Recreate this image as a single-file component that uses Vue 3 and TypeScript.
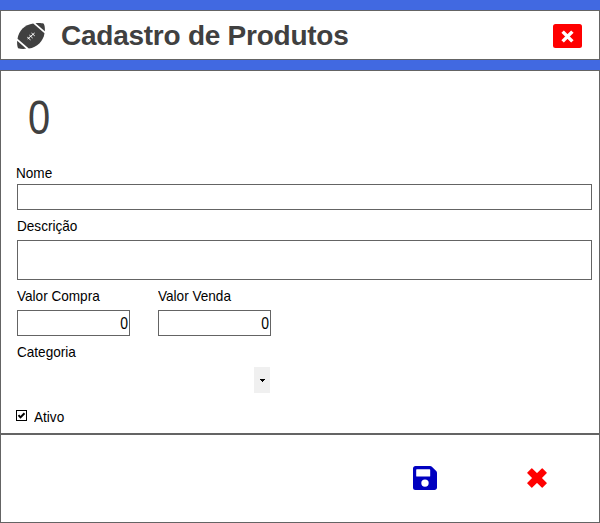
<script setup lang="ts">
import { ref } from 'vue'

const codigo = ref<number>(0)
const nome = ref<string>('')
const descricao = ref<string>('')
const valorCompra = ref<string>('0')
const valorVenda = ref<string>('0')
const ativo = ref<boolean>(true)
</script>

<template>
  <div class="window">
    <header class="titlebar">
      <svg class="ball" viewBox="0 0 28 26">
        <path d="M18.500.2C21.500-.1 24.800 0 26.800.7c.9 1.800 1.300 4.700 1 7.600z" />
        <path d="M.2 17.700C-.1 20.600.2 23.400 1.100 25.200c2.200.8 5.100.9 8.100.6z" />
        <path d="M.5 15.700C1.600 7.700 7.600 1.600 16.200.4L27.500 10.300C26.300 18.300 20.200 24.400 11.800 25.600z" />
        <path class="stitch" d="M10.600 15.900 17.600 10M10.300 14.200l3.200 2.700M12.400 12.100l3.200 2.900M14.500 10.100l3.200 2.700" />
      </svg>
      <h1>Cadastro de Produtos</h1>
      <button class="close" type="button" aria-label="Fechar">
        <svg viewBox="0 0 12 12"><path d="M1.500 1.500l9 9M10.500 1.500l-9 9" /></svg>
      </button>
    </header>

    <main class="form">
      <div class="code"><span>{{ codigo }}</span></div>
      <label class="name-label" for="nome"><span>Nome</span></label>
      <input id="nome" v-model="nome" class="name-box" />
      <label class="desc-label" for="descricao"><span>Descrição</span></label>
      <textarea id="descricao" v-model="descricao" class="desc-box"></textarea>
      <div class="values">
        <div>
          <label for="compra"><span>Valor Compra</span></label>
          <div id="compra" class="number"><span>{{ valorCompra }}</span></div>
        </div>
        <div>
          <label for="venda"><span>Valor Venda</span></label>
          <div id="venda" class="number"><span>{{ valorVenda }}</span></div>
        </div>
      </div>
      <label class="cat-label"><span>Categoria</span></label>
      <div class="combo">
        <button type="button" aria-label="Abrir">
          <svg viewBox="0 0 5 3" shape-rendering="crispEdges"><path d="M0 0h5v1H4v1H3v1H2V2H1V1H0z" /></svg>
        </button>
      </div>
      <div class="active" @click="ativo = !ativo">
        <div class="check">
          <svg v-if="ativo" viewBox="0 0 9 9"><path d="M1.500 4.200l2 2.200 4-4.200" /></svg>
        </div>
        <label><span>Ativo</span></label>
      </div>
    </main>

    <footer class="actions">
      <button class="save" type="button" aria-label="Salvar">
        <svg viewBox="0 0 24 24">
          <path fill-rule="evenodd" d="M2.500 0H17c.8 0 1.400.3 1.900.8l4.300 4.300c.5.5.8 1.100.8 1.900v14.500c0 1.400-1.100 2.500-2.500 2.500h-19A2.500 2.500 0 0 1 0 21.500V2.500C0 1.100 1.100 0 2.500 0zM3.800 3.300a.6.6 0 0 0-.6.6v6c0 .4.2.6.6.6h12.800c.4 0 .6-.2.6-.6v-6c0-.4-.2-.6-.6-.6zM12 13.400a3.700 3.700 0 1 0 0 7.400 3.700 3.700 0 0 0 0-7.400z" />
        </svg>
      </button>
      <button class="cancel" type="button" aria-label="Cancelar">
        <svg viewBox="0 0 20 20">
          <path stroke-linejoin="round" d="M4.800.8 10 6 15.200.8 19.200 4.800 14 10l5.200 5.200-4 4L10 14l-5.200 5.200-4-4L6 10 .8 4.800z" />
        </svg>
      </button>
    </footer>
  </div>
</template>

<style>
body {
  margin: 0;
  background: #4169e1;
}
</style>

<style scoped>
* {
  box-sizing: border-box;
}
svg {
  display: block;
}
button {
  border: 0;
  padding: 0;
  background: none;
}
.window {
  display: flex;
  flex-direction: column;
  width: 600px;
  height: 523px;
  padding-top: 10px;
  background: #4169e1;
  color: #000;
  font-family: "Liberation Sans", Arial, sans-serif;
  font-size: 15px;
}
.titlebar,
.form,
.actions {
  border: 1px solid #646464;
  background: #fff;
}
.titlebar {
  display: flex;
  align-items: center;
  height: 50px;
  margin-bottom: 10px;
  padding: 2px 17px 0 16px;
}
.ball {
  width: 28px;
  height: 26px;
  fill: #404040;
}
.ball .stitch {
  fill: none;
  stroke: #fff;
  stroke-width: 1;
}
h1 {
  flex: 1;
  margin: 0 0 0 16px;
  color: #404040;
  font-size: 28px;
  line-height: 32px;
  letter-spacing: -0.25px;
}
.close {
  display: flex;
  align-items: center;
  justify-content: center;
  width: 29px;
  height: 24px;
  border-radius: 2.5px;
  background: #f00;
}
.close svg {
  width: 13px;
  height: 13px;
  fill: none;
  stroke: #fff;
  stroke-width: 3.2;
}
.form {
  display: flex;
  flex-direction: column;
  height: 364px;
  padding: 0 7px 0 16px;
}
.code {
  height: 93px;
  padding: 19px 0 0 11px;
  color: #404040;
  font-size: 48px;
  line-height: 55px;
}
.code span {
  display: inline-block;
  transform: scaleX(0.83);
  transform-origin: left;
}
label {
  display: block;
  height: 18px;
  line-height: 18px;
  white-space: nowrap;
}
label span {
  display: inline-block;
  transform: scaleX(0.905);
  transform-origin: left;
}
.name-label {
  margin-left: -1px;
}
input,
textarea,
.number {
  display: block;
  margin: 0;
  padding: 0 2px;
  border: 1px solid #646464;
  border-radius: 0;
  background: #fff;
  outline: 0;
  resize: none;
}
.name-box {
  width: 575px;
  height: 26px;
  margin-top: 2px;
}
.desc-label {
  margin-top: 7px;
}
.desc-box {
  width: 575px;
  height: 40px;
  margin-top: 5px;
}
.values {
  display: flex;
  gap: 28px;
  margin-top: 7px;
}
.values > div {
  width: 113px;
}
.number {
  height: 26px;
  margin-top: 5px;
  padding: 0 1px;
  font-size: 16px;
  line-height: 25px;
  text-align: right;
}
.number span {
  display: inline-block;
  transform: scaleX(0.87);
  transform-origin: right;
}
.cat-label {
  margin-top: 7px;
}
.combo {
  display: flex;
  justify-content: flex-end;
  width: 253px;
  height: 26px;
  margin-top: 6px;
}
.combo button {
  display: block;
  width: 16px;
  padding: 12px 0 11px 6px;
  background: #f0f0f0;
}
.combo svg {
  width: 5px;
  height: 3px;
}
.active {
  display: flex;
  align-items: center;
  gap: 7px;
  margin: 15px 0 0 -1px;
}
.check {
  width: 11px;
  height: 11px;
  margin-bottom: 3px;
  border: 1px solid #000;
}
.check svg {
  width: 9px;
  height: 9px;
  fill: none;
  stroke: #000;
  stroke-width: 2;
}
.actions {
  display: flex;
  align-items: center;
  justify-content: flex-end;
  gap: 90px;
  height: 89px;
  padding: 0 52px 1px 0;
}
.save svg {
  width: 24px;
  height: 24px;
  fill: #0000c0;
}
.cancel svg {
  width: 20px;
  height: 20px;
  fill: #f00;
  stroke: #f00;
  stroke-width: 1.2;
}
</style>
